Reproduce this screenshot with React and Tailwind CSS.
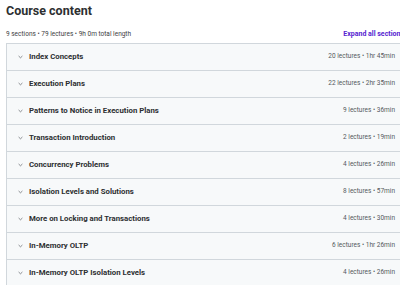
import React from "react";

const sections = [
  ["Index Concepts", "20 lectures • 1hr 45min"],
  ["Execution Plans", "22 lectures • 2hr 35min"],
  ["Patterns to Notice in Execution Plans", "9 lectures • 36min"],
  ["Transaction Introduction", "2 lectures • 19min"],
  ["Concurrency Problems", "4 lectures • 26min"],
  ["Isolation Levels and Solutions", "8 lectures • 57min"],
  ["More on Locking and Transactions", "4 lectures • 30min"],
  ["In-Memory OLTP", "6 lectures • 1hr 26min"],
  ["In-Memory OLTP Isolation Levels", "4 lectures • 26min"],
];

function Chevron() {
  return (
    <svg width="5" height="4" viewBox="0 0 5 4" className="shrink-0">
      <path d="M0.6 1 L2.5 2.8 L4.4 1" fill="none" stroke="#6a6f73" strokeWidth="0.8" />
    </svg>
  );
}

export default function App() {
  return (
    <div className="w-[400px] h-[285px] overflow-hidden bg-white text-[#2d2f31]" style={{ fontFamily: "Roboto, 'Noto Sans', sans-serif" }}>
      <div className="pl-[6px]">
        <h2 className="text-[12.5px] font-bold leading-none pt-[5px]">Course content</h2>
        <div className="flex items-end justify-between mt-[11px] h-[9px] w-[398px]">
          <span className="text-[6.5px] leading-none text-[#3e4143]">9 sections • 79 lectures • 9h 0m total length</span>
          <span className="text-[7px] font-bold leading-none text-[#5624d0] whitespace-nowrap">Expand all sections</span>
        </div>
        <div className="mt-[5px] w-[398px] border-l border-t border-[#d1d7dc]">
          {sections.map(([t, m]) => (
            <div key={t} className="h-[27px] flex items-center bg-[#f7f9fa] border-b border-[#d1d7dc] pl-[11px]">
              <Chevron />
              <span className="ml-[6px] text-[7.8px] font-bold leading-none">{t}</span>
              <span className="ml-auto mr-[9px] text-[6.5px] leading-none text-[#55595d]">{m}</span>
            </div>
          ))}
        </div>
      </div>
    </div>
  );
}
